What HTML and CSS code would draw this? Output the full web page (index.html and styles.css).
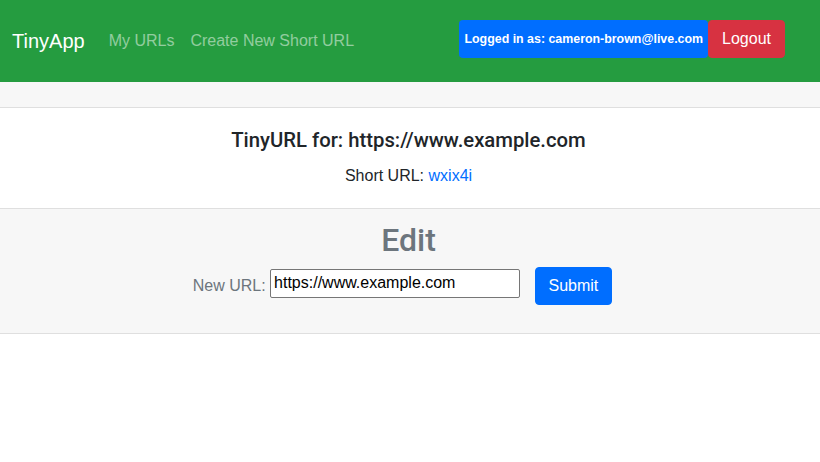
FILE: index.html
```html
<!DOCTYPE html>
<html>
<head>
<meta charset="utf-8">
<title>TinyApp</title>
<link rel="stylesheet" href="styles.css">
</head>
<body>
<nav class="navbar">
  <a class="brand" href="#">TinyApp</a>
  <div class="nav-links">
    <a class="nav-link" href="#">My URLs</a>
    <a class="nav-link" href="#">Create New Short URL</a>
  </div>
  <form class="user-form">
    <span class="badge">Logged in as: cameron-brown@live.com</span>
    <button type="button" class="btn btn-danger">Logout</button>
  </form>
</nav>
<div class="card">
  <div class="card-header"></div>
  <div class="card-body">
    <h5 class="card-title">TinyURL for: https://www.example.com</h5>
    <p class="card-text">Short URL: <a class="link" href="#">wxix4i</a></p>
  </div>
  <div class="card-footer">
    <h2 class="edit-title">Edit</h2>
    <form class="edit-form">
      <label class="edit-label" for="newurl">New URL:</label>
      <input id="newurl" class="edit-input" type="text" value="https://www.example.com">
      <button type="button" class="btn btn-primary">Submit</button>
    </form>
  </div>
</div>
</body>
</html>
```

FILE: styles.css
```css
* { box-sizing: border-box; }
html, body { margin: 0; padding: 0; }
body {
  font-family: "Liberation Sans", Arial, sans-serif;
  font-size: 16px;
  line-height: 1.5;
  color: #212529;
  background: #fff;
}
a { text-decoration: none; }

.navbar {
  display: flex;
  align-items: center;
  height: 82px;
  padding: 0 35px 0 12px;
  background: #259c40;
}
.brand {
  font-size: 20px;
  line-height: 30px;
  padding: 5px 0;
  margin-right: 16px;
  color: #fff;
}
.nav-links { display: flex; flex: 1; }
.nav-link {
  padding: 8px;
  line-height: 24px;
  color: rgba(255,255,255,.5);
}
.user-form {
  display: flex;
  align-items: stretch;
  margin: 0 0 4px 0;
}
.badge {
  display: inline-flex;
  align-items: center;
  padding: 0 5px;
  font-size: 12.4px;
  font-weight: 700;
  color: #fff;
  background: #006eff;
  border-radius: 4px;
  white-space: nowrap;
}
.btn {
  font-family: inherit;
  font-size: 16px;
  line-height: 24px;
  padding: 6px 13px;
  border: 1px solid transparent;
  border-radius: 4px;
  color: #fff;
  cursor: pointer;
}
.btn-danger { background: #d73241; border-color: #d73241; }
.btn-primary { background: #006eff; border-color: #006eff; }

.card-header {
  height: 26px;
  background: #f7f7f7;
  border-bottom: 1px solid #dfdfdf;
}
.card-body {
  padding: 20px 23px 20px 20px;
  text-align: center;
  border-bottom: 1px solid #dfdfdf;
}
.card-title {
  margin: 0 0 12px;
  font-family: Roboto, "Liberation Sans", sans-serif;
  font-size: 20.3px;
  font-weight: 500;
  line-height: 24px;
}
.card-text { margin: 0; }
.link { color: #006eff; }

.card-footer {
  padding: 12px 23px 12px 20px;
  background: #f7f7f7;
  border-bottom: 1px solid #dfdfdf;
  text-align: center;
  color: #6c757d;
}
.edit-title {
  margin: 0 0 8px;
  font-family: Roboto, "Liberation Sans", sans-serif;
  font-size: 32px;
  font-weight: 500;
  line-height: 38.4px;
}
.edit-form {
  margin: 0 0 16px;
  padding-right: 12px;
}
.edit-label { margin-right: 0; }
.edit-input {
  width: 250px;
  height: 29px;
  padding: 4px 3px;
  font-family: "Liberation Sans", Arial, sans-serif;
  font-size: 16px;
  line-height: 19px;
  color: #000;
  background: #fff;
  border: 1px solid #767676;
  border-radius: 2px;
  vertical-align: 3px;
}
.edit-form .btn { margin-left: 10px; }
```
